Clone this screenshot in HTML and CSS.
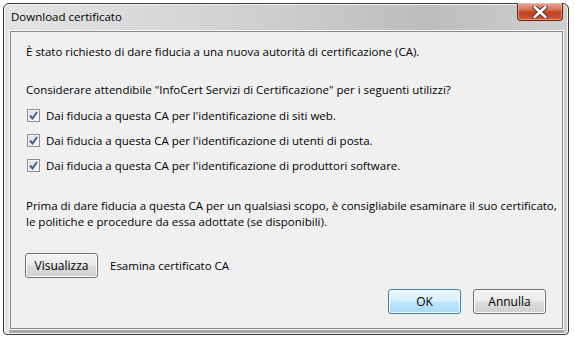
FILE: index.html
```html
<!DOCTYPE html>
<html>
<head>
  <title>Download certificato</title>
  <link rel="stylesheet" href="styles.css">
</head>
<body>
  <div class="window">
    <div class="titlebar">
      <span class="title">Download certificato</span>
      <button class="close" aria-label="Chiudi">
        <svg width="16" height="12" viewBox="0 0 16 12">
          <path d="M3 1.5 L13 10.5 M13 1.5 L3 10.5" stroke="#5a2a20" stroke-width="4.6" stroke-linecap="square"/>
          <path d="M3 1.5 L13 10.5 M13 1.5 L3 10.5" stroke="#fff" stroke-width="2.8" stroke-linecap="square"/>
        </svg>
      </button>
    </div>

    <div class="content">
      <p class="intro">È stato richiesto di dare fiducia a una nuova autorità di certificazione (CA).</p>

      <p class="question">Considerare attendibile "InfoCert Servizi di Certificazione" per i seguenti utilizzi?</p>
      <ul class="options">
        <li><span class="check"><svg width="9" height="9" viewBox="0 0 9 9"><path d="M1 4.5 L3.5 7.5 L8 1" fill="none" stroke="#4b5f93" stroke-width="2"/></svg></span>Dai fiducia a questa CA per l'identificazione di siti web.</li>
        <li><span class="check"><svg width="9" height="9" viewBox="0 0 9 9"><path d="M1 4.5 L3.5 7.5 L8 1" fill="none" stroke="#4b5f93" stroke-width="2"/></svg></span>Dai fiducia a questa CA per l'identificazione di utenti di posta.</li>
        <li><span class="check"><svg width="9" height="9" viewBox="0 0 9 9"><path d="M1 4.5 L3.5 7.5 L8 1" fill="none" stroke="#4b5f93" stroke-width="2"/></svg></span>Dai fiducia a questa CA per l'identificazione di produttori software.</li>
      </ul>

      <p class="advice">Prima di dare fiducia a questa CA per un qualsiasi scopo, è consigliabile esaminare il suo certificato,<br>le politiche e procedure da essa adottate (se disponibili).</p>

      <div class="view-row">
        <button class="btn">Visualizza</button>
        <span>Esamina certificato CA</span>
      </div>

      <div class="actions">
        <button class="btn btn-default">OK</button>
        <button class="btn">Annulla</button>
      </div>
    </div>
  </div>
</body>
</html>
```

FILE: styles.css
```css
body {
  margin: 0;
  background: #fff;
  font-family: "Open Sans", "Noto Sans", sans-serif;
  font-size: 11.5px;
  color: #000;
}

.window {
  margin: 3px 4px 0 3px;
  width: 566px;
  height: 332px;
  border: 1px solid #3c3c3c;
  border-radius: 6px 6px 4px 4px;
  background: linear-gradient(to right, #e4e4e4 0%, #d2d2d2 40%, #bdbdbd 75%, #cfcfcf 100%);
  box-shadow: inset 0 0 0 1px #f4f4f4;
  display: flex;
  flex-direction: column;
  padding: 0 5px 5px 6px;
  box-sizing: border-box;
}

.titlebar {
  height: 27px;
  display: flex;
  justify-content: space-between;
  align-items: flex-start;
}

.title {
  margin-top: 5px;
  margin-left: 1px;
  font-size: 11.5px;
}

.close {
  width: 46px;
  height: 18px;
  margin-top: -1px;
  padding: 0;
  border: 1px solid #5e2a20;
  border-top: none;
  border-radius: 0 0 4px 4px;
  background: linear-gradient(#e6a595 0%, #d87a62 35%, #c2411f 55%, #cf5a3c 100%);
  box-shadow: inset 0 0 0 1px rgba(255, 200, 190, 0.5);
  display: flex;
  align-items: center;
  justify-content: center;
}

.content {
  flex: 1;
  background: #f0f0f0;
  border: 1px solid #8a8a8a;
  box-shadow: 0 0 0 1px #f6f6f6, 0 3px 0 1px #a8a8a8;
  padding: 12px 15px 0 15px;
  display: flex;
  flex-direction: column;
}

p {
  margin: 0;
  line-height: 16px;
  white-space: nowrap;
}

.question {
  margin-top: 22px;
}

.options {
  list-style: none;
  margin: 5px 0 0 1px;
  padding: 0;
}

.options li {
  display: flex;
  align-items: center;
  height: 25px;
}

.check {
  width: 11px;
  height: 11px;
  border: 1px solid #8e8f8f;
  background: linear-gradient(135deg, #dcdcdc, #fafafa);
  box-shadow: inset 0 0 0 1px #f4f4f4;
  margin-right: 6px;
  display: flex;
  align-items: center;
  justify-content: center;
}

.advice {
  margin-top: 20px;
}

.view-row {
  display: flex;
  align-items: center;
  gap: 12px;
  margin-top: 23px;
}

.btn {
  height: 25px;
  min-width: 73px;
  padding: 0 8px;
  border: 1px solid #707070;
  border-radius: 3px;
  font-family: inherit;
  font-size: 12px;
  color: #000;
  background: linear-gradient(#f2f2f2 0%, #ebebeb 48%, #dddddd 52%, #cfcfcf 100%);
  box-shadow: inset 0 0 0 1px #fcfcfc;
}

.view-row .btn {
  margin-left: -1px;
}

.btn-default {
  border-color: #3c7fb1;
  background: linear-gradient(#eaf6fd 0%, #d9f0fc 48%, #bee6fd 52%, #a7d9f5 100%);
}

.actions {
  display: flex;
  justify-content: flex-end;
  gap: 12px;
  margin-top: 11px;
  padding-right: 1px;
}
```
